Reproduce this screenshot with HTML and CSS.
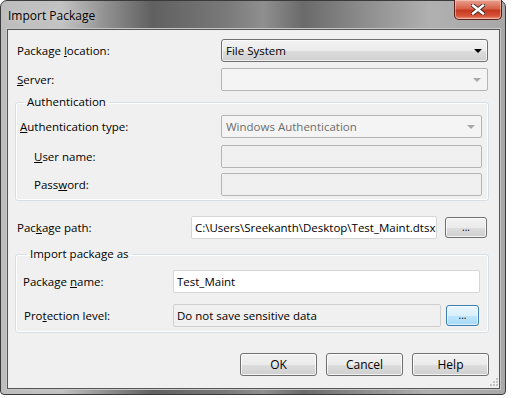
FILE: index.html
```html
<!DOCTYPE html>
<html>
<head>
<meta charset="utf-8">
<link rel="stylesheet" href="styles.css">
</head>
<body>
<div class="window">
  <div class="titlebar">
    <span class="title">Import Package</span>
    <div class="close">
      <svg width="14" height="11" viewBox="0 0 14 11"><path d="M2 1.5 L12 9.5 M12 1.5 L2 9.5" stroke="#3a2a2a" stroke-width="4.2" stroke-linecap="square"/><path d="M2 1.5 L12 9.5 M12 1.5 L2 9.5" stroke="#fff" stroke-width="2.4" stroke-linecap="square"/></svg>
    </div>
  </div>
  <div class="client">
    <div class="row r1">
      <label class="lbl w204">Package <u>l</u>ocation:</label>
      <div class="combo active w267"><span>File System</span><i class="arrow dark"></i></div>
    </div>
    <div class="row r2">
      <label class="lbl w204"><u>S</u>erver:</label>
      <div class="combo disabled w267"><span></span><i class="arrow"></i></div>
    </div>
    <fieldset class="group g1">
      <legend>Authentication</legend>
      <div class="row">
        <label class="lbl w201"><u>A</u>uthentication type:</label>
        <div class="combo disabled w261"><span class="dim">Windows Authentication</span><i class="arrow"></i></div>
      </div>
      <div class="row r-user">
        <label class="lbl w187 indent"><u>U</u>ser name:</label>
        <div class="input disabled w261"></div>
      </div>
      <div class="row r-pass">
        <label class="lbl w187 indent">Pass<u>w</u>ord:</label>
        <div class="input disabled w261"></div>
      </div>
    </fieldset>
    <div class="row r-path">
      <label class="lbl w174">Pac<u>k</u>age path:</label>
      <div class="input white w246">C:\Users\Sreekanth\Desktop\Test_Maint.dtsx</div>
      <button class="btn dots w42">...</button>
    </div>
    <fieldset class="group g2">
      <legend>Import package as</legend>
      <div class="row">
        <label class="lbl w150">Package <u>n</u>ame:</label>
        <div class="input white w307">Test_Maint</div>
      </div>
      <div class="row r-prot">
        <label class="lbl w150 prot">Pro<u>t</u>ection level:</label>
        <div class="input readonly w268">Do not save sensitive data</div>
        <button class="btn dots focus w33">...</button>
      </div>
    </fieldset>
    <div class="actions">
      <button class="btn act">OK</button>
      <button class="btn act">Cancel</button>
      <button class="btn act">Help</button>
    </div>
    <div class="grip">
      <svg width="8" height="8" viewBox="0 0 8 8" fill="#c4c4c4"><rect x="6" y="0" width="2" height="2"/><rect x="3" y="3" width="2" height="2"/><rect x="6" y="3" width="2" height="2"/><rect x="0" y="6" width="2" height="2"/><rect x="3" y="6" width="2" height="2"/><rect x="6" y="6" width="2" height="2"/></svg>
    </div>
  </div>
</div>
</body>
</html>
```
FILE: styles.css
```css
* { box-sizing: border-box; }
html, body { margin: 0; padding: 0; background: #ffffff; }
body {
  font-family: "Open Sans", "Noto Sans", "Liberation Sans", sans-serif;
  font-size: 11.5px;
  color: #000;
  width: 512px;
  height: 398px;
  overflow: hidden;
}
.window {
  width: 506px;
  height: 395px;
  border: 1px solid #3a3a3a;
  border-radius: 7px 7px 4px 4px;
  background: linear-gradient(90deg, #bdbdbd 0%, #c2c2c2 12%, #8a8a8a 22%, #606060 30%, #7a7a7a 45%, #8f8f8f 52%, #6a6a6a 60%, #8d8d8d 72%, #b0b0b0 85%, #a8a8a8 100%);
  display: flex;
  flex-direction: column;
  padding: 0 5px 5px 6px;
}
.titlebar {
  height: 28px;
  display: flex;
  align-items: flex-start;
  justify-content: space-between;
  flex: none;
}
.title {
  font-size: 12px;
  margin: 6px 0 0 1px;
  color: #000;
  text-shadow: 0 0 6px rgba(255,255,255,0.6);
}
.close {
  width: 48px;
  height: 20px;
  margin-top: -1px;
  margin-right: -2px;
  border: 1px solid #5a2218;
  border-top: none;
  border-radius: 0 0 5px 5px;
  background: linear-gradient(180deg, #e8a18f 0%, #d7624a 45%, #c5391f 55%, #d9543a 85%, #e8a08a 100%);
  box-shadow: inset 0 0 0 1px rgba(255,220,210,0.5);
  display: flex;
  align-items: center;
  justify-content: center;
}
.client {
  flex: 1;
  position: relative;
  background: #f0f0f0;
  border: 1px solid #555;
  box-shadow: 0 0 0 1px #c8c8c8;
  padding: 9px 10px 0 0;
  display: flex;
  flex-direction: column;
}
.row {
  display: flex;
  align-items: center;
  flex: none;
}
.r1 { margin-left: 9px; }
.r2 { margin-top: 6px; margin-left: 9px; }
.lbl { flex: none; white-space: nowrap; }
.w204 { width: 204px; }
.w201 { width: 201px; }
.w187 { width: 187px; }
.w174 { width: 174px; }
.w150 { width: 150px; }
.indent { margin-left: 14px; }
.prot { padding-left: 1px; }
.w267 { width: 267px; }
.w261 { width: 261px; }
.w246 { width: 246px; }
.w307 { width: 307px; }
.w268 { width: 268px; }
.w42 { width: 42px; }
.w33 { width: 33px; }

.combo {
  height: 23px;
  display: flex;
  align-items: center;
  justify-content: space-between;
  padding: 0 6px 0 4px;
  border-radius: 3px;
  flex: none;
}
.combo.active {
  border: 1px solid #707070;
  background: linear-gradient(180deg, #f2f2f2 0%, #ebebeb 50%, #dddddd 51%, #cfcfcf 100%);
  box-shadow: inset 0 0 0 1px rgba(255,255,255,0.7);
}
.combo.disabled {
  border: 1px solid #b5b5b5;
  background: #f4f4f4;
  border-radius: 2px;
}
.dim { color: #6d6d6d; }
.arrow {
  width: 0; height: 0;
  border-left: 4px solid transparent;
  border-right: 4px solid transparent;
  border-top: 4px solid #a8a8a8;
  margin-top: 1px;
}
.arrow.dark { border-top-color: #000; margin-right: -1px; }

.input {
  height: 23px;
  flex: none;
  border: 1px solid #c2c2c2;
  border-radius: 2px;
  padding: 0 3px;
  display: flex;
  align-items: center;
  white-space: nowrap;
  overflow: hidden;
}
.input.disabled { background: #f0f0f0; border-color: #b5b5b5; }
.input.white { background: #ffffff; border-color: #d6d6d6; }
.input.readonly { background: #f0f0f0; border-color: #cfcfcf; }

.group {
  margin: 3px 0 0 7px;
  width: 474px;
  border: 1px solid #d5dfe5;
  box-shadow: inset 0 0 0 1px #ffffff;
  border-radius: 3px;
  padding: 5px 0 4px 4px;
  min-width: 0;
  flex: none;
}
.group legend {
  padding: 0 3px;
  margin-left: 4px;
  font-size: 11.5px;
  line-height: 16px;
}
.r-user { margin-top: 7px; }
.r-pass { margin-top: 5px; }
.r-path { margin-top: 15px; margin-left: 9px; }
.g2 { margin-top: 7px; padding: 8px 0 5px 7px; }
.r-prot { margin-top: 11px; }
.r-prot .btn { margin-left: 5px; }
.r-path .btn { margin-left: 8px; }

.btn {
  font-family: inherit;
  font-size: 11.5px;
  color: #000;
  height: 21px;
  border: 1px solid #707070;
  border-radius: 3px;
  background: linear-gradient(180deg, #f2f2f2 0%, #ebebeb 50%, #dddddd 51%, #cfcfcf 100%);
  box-shadow: inset 0 0 0 1px rgba(255,255,255,0.75);
  padding: 0;
  flex: none;
}
.btn.dots { line-height: 12px; padding-bottom: 2px; font-size: 10px; }
.btn.focus {
  border-color: #3c7fb1;
  background: linear-gradient(180deg, #eaf6fd 0%, #d9f0fc 50%, #bee6fd 51%, #a7d9f5 100%);
  box-shadow: inset 0 0 0 1px rgba(255,255,255,0.6);
}
.actions {
  display: flex;
  justify-content: flex-end;
  gap: 9px;
  margin-top: 20px;
  flex: none;
}
.btn.act { width: 77px; height: 23px; font-size: 12px; }
.grip {
  position: absolute;
  right: 1px;
  bottom: 2px;
  line-height: 0;
}
```
